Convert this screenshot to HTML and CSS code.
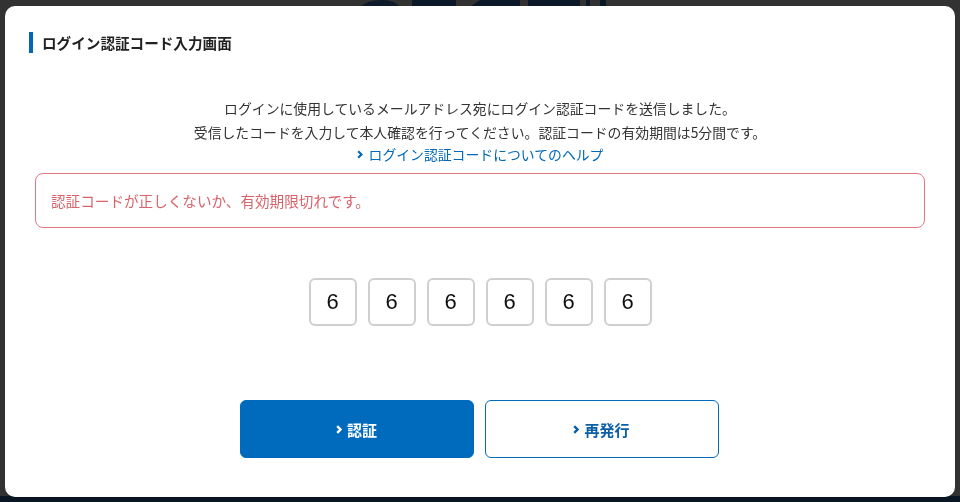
FILE: index.html
```html
<!DOCTYPE html>
<html lang="ja">
<head>
<meta charset="utf-8">
<title>ログイン認証コード入力画面</title>
<link rel="stylesheet" href="styles.css">
</head>
<body>
<div class="backdrop">
  <div class="bg-logo">
    <svg width="260" height="8" viewBox="0 0 260 8">
      <path d="M0 8 Q6 0 22 0 Q36 0 40 8 Z" fill="#0d1b2a"/>
      <rect x="52" y="0" width="44" height="8" fill="#0a1828"/>
      <path d="M108 8 L120 0 L160 0 L160 8 Z" fill="#0a1828"/>
      <rect x="168" y="0" width="52" height="8" fill="#0a1828"/>
      <rect x="226" y="0" width="4" height="8" fill="#0a1828"/>
      <rect x="240" y="0" width="6" height="8" fill="#0a1828"/>
    </svg>
  </div>
  <div class="bg-footer"></div>
</div>

<div class="modal" role="dialog">
  <h1 class="modal-title">ログイン認証コード入力画面</h1>

  <div class="intro">
    <p>ログインに使用しているメールアドレス宛にログイン認証コードを送信しました。</p>
    <p>受信したコードを入力して本人確認を行ってください。認証コードの有効期間は5分間です。</p>
    <p class="help"><a class="help-link" href="#"><svg class="chev" width="6" height="9" viewBox="0 0 6 9"><path d="M1.2 1.2 L4.5 4.5 L1.2 7.8" fill="none" stroke="currentColor" stroke-width="2.2"/></svg>ログイン認証コードについてのヘルプ</a></p>
  </div>

  <div class="error-box">認証コードが正しくないか、有効期限切れです。</div>

  <div class="code-row">
    <input class="code" type="text" value="6" maxlength="1">
    <input class="code" type="text" value="6" maxlength="1">
    <input class="code" type="text" value="6" maxlength="1">
    <input class="code" type="text" value="6" maxlength="1">
    <input class="code" type="text" value="6" maxlength="1">
    <input class="code" type="text" value="6" maxlength="1">
  </div>

  <div class="actions">
    <button class="btn btn-primary"><svg class="chev" width="6" height="9" viewBox="0 0 6 9"><path d="M1.2 1.2 L4.5 4.5 L1.2 7.8" fill="none" stroke="currentColor" stroke-width="2.4"/></svg>認証</button>
    <button class="btn btn-outline"><svg class="chev" width="6" height="9" viewBox="0 0 6 9"><path d="M1.2 1.2 L4.5 4.5 L1.2 7.8" fill="none" stroke="currentColor" stroke-width="2.4"/></svg>再発行</button>
  </div>
</div>
</body>
</html>
```

FILE: styles.css
```css
* { box-sizing: border-box; }

html, body {
  margin: 0;
  padding: 0;
  width: 960px;
  height: 502px;
  overflow: hidden;
}

body {
  background: #323232;
  font-family: "Noto Sans CJK JP", "Noto Sans", sans-serif;
  color: #333;
}

.backdrop {
  position: fixed;
  inset: 0;
  display: flex;
  flex-direction: column;
  justify-content: space-between;
}

.bg-logo {
  display: flex;
  justify-content: center;
  margin-left: 20px;
  height: 8px;
  line-height: 0;
}

.bg-footer {
  height: 6px;
  background: #0b1624;
}

.modal {
  position: fixed;
  left: 5px;
  top: 6px;
  width: 950px;
  height: 491px;
  background: #fff;
  border-radius: 10px;
  padding: 26px 30px 0;
  box-shadow: 0 1px 1px rgba(0,0,0,0.25);
}

.modal-title {
  margin: 0 0 0 -6px;
  font-size: 14.6px;
  line-height: 21px;
  font-weight: 700;
  color: #222;
  border-left: 4px solid #0068b7;
  padding-left: 9px;
}

.intro {
  margin-top: 43px;
  text-align: center;
  font-size: 13.85px;
  line-height: 24px;
  color: #333;
}

.intro p { margin: 0; }

.intro .help {
  display: flex;
  justify-content: center;
  height: 21px;
  line-height: 21px;
}

.help-link {
  color: #0068b7;
  text-decoration: none;
  display: flex;
  align-items: center;
  gap: 6px;
}

.chev { display: block; flex: none; }

.error-box {
  margin-top: 8px;
  border: 1px solid #e07a80;
  border-radius: 8px;
  padding: 18px 15px;
  font-size: 14.6px;
  line-height: 17px;
  color: #d8636b;
}

.code-row {
  margin-top: 50px;
  display: flex;
  justify-content: center;
  gap: 11px;
}

.code {
  width: 48px;
  height: 48px;
  border: 2px solid #cfcfcf;
  border-radius: 6px;
  text-align: center;
  font-family: "Liberation Sans", Arial, sans-serif;
  font-size: 22px;
  color: #111;
  padding: 0;
  outline: none;
  background: #fff;
}

.actions {
  margin-top: 74px;
  display: flex;
  justify-content: center;
  gap: 11px;
  padding-right: 2px;
}

.btn {
  width: 234px;
  height: 58px;
  border-radius: 6px;
  font-family: "Noto Sans CJK JP", "Noto Sans", sans-serif;
  font-size: 15px;
  font-weight: 700;
  display: flex;
  align-items: center;
  justify-content: center;
  gap: 5px;
  cursor: pointer;
  padding: 0;
}

.btn-primary {
  background: #006bbd;
  border: 1px solid #006bbd;
  color: #fff;
}

.btn-outline {
  background: #fff;
  border: 1px solid #006bbd;
  color: #0a5fa8;
}
```
